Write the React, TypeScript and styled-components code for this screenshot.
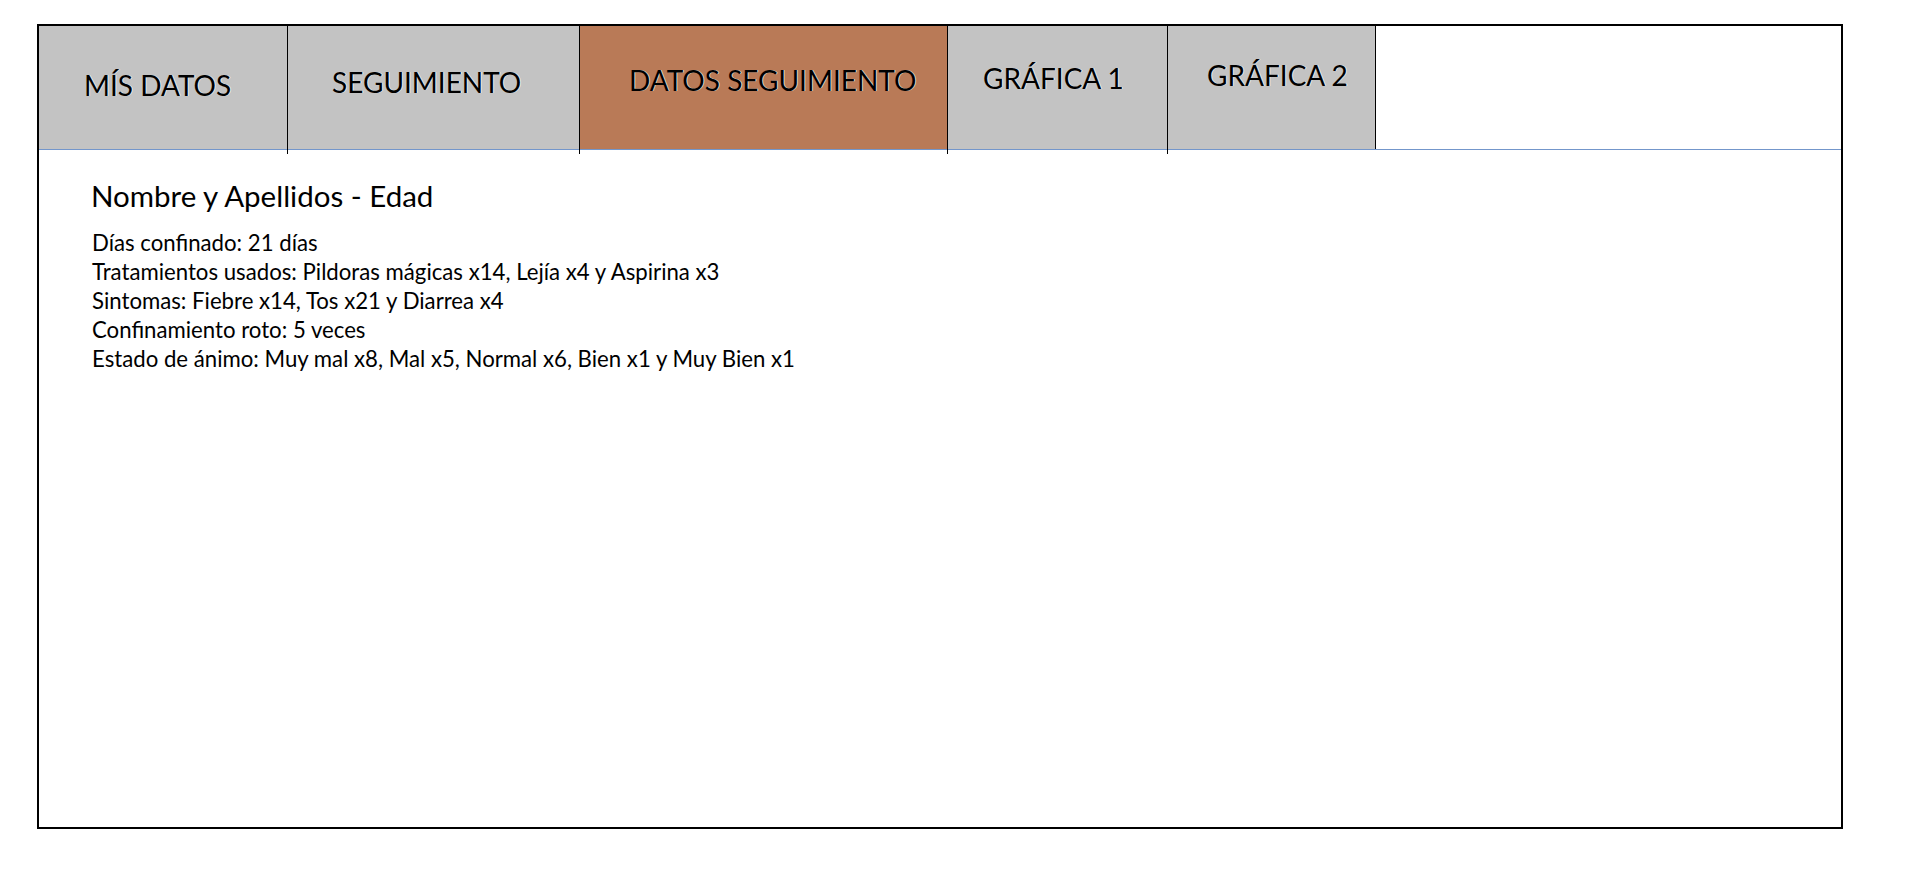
import React from "react";
import styled, { createGlobalStyle } from "styled-components";

const GlobalStyle = createGlobalStyle`
    html, body {
        margin: 0;
        padding: 0;
        background: #fff;
        font-family: Lato, "Open Sans", sans-serif;
        color: #000;
    }
`;

const Page = styled.div`
    padding: 24px 0 0 37px;
`;

const Frame = styled.div`
    width: 1806px;
    height: 805px;
    box-sizing: border-box;
    border: 2px solid #000;
    display: flex;
    flex-direction: column;
`;

const TabBar = styled.div`
    display: flex;
    height: 123px;
    border-bottom: 1px solid #7396cb;
`;

const Tab = styled.div<{ $width: number; $active?: boolean; $padLeft: number; $padTop: number; $tail?: boolean }>`
    position: relative;
    width: ${(p) => p.$width}px;
    box-sizing: border-box;
    background: ${(p) => (p.$active ? "#B97A57" : "#C3C3C3")};
    border-right: 1px solid #000;
    padding-left: ${(p) => p.$padLeft}px;
    padding-top: ${(p) => p.$padTop}px;
    font-size: 28px;
    text-shadow: 1px 0 0 rgba(255, 255, 255, 0.7);
    white-space: nowrap;

    &::after {
        content: "";
        display: ${(p) => (p.$tail ? "block" : "none")};
        position: absolute;
        right: -1px;
        bottom: -5px;
        width: 1px;
        height: 5px;
        background: #000;
    }
`;

const Content = styled.div`
    padding: 30px 0 0 52px;
`;

const Heading = styled.h1`
    margin: 0 0 16px;
    font-size: 29.5px;
    font-weight: 400;
    line-height: 32px;
`;

const Line = styled.p`
    margin: 0;
    padding-left: 1px;
    font-size: 22.2px;
    line-height: 29px;
`;

const tabs = [
    { label: "MÍS DATOS", width: 249, padLeft: 45, padTop: 42, tail: true },
    { label: "SEGUIMIENTO", width: 292, padLeft: 44, padTop: 39, tail: true },
    { label: "DATOS SEGUIMIENTO", width: 368, padLeft: 49, padTop: 37, active: true, tail: true },
    { label: "GRÁFICA 1", width: 220, padLeft: 35, padTop: 35, tail: true },
    { label: "GRÁFICA 2", width: 208, padLeft: 39, padTop: 32 },
];

const lines = [
    "Días confinado: 21 días",
    "Tratamientos usados: Pildoras mágicas x14, Lejía x4 y Aspirina x3",
    "Sintomas: Fiebre x14, Tos x21 y Diarrea x4",
    "Confinamiento roto: 5 veces",
    "Estado de ánimo: Muy mal x8, Mal x5, Normal x6, Bien x1 y Muy Bien x1",
];

export default function App() {
    return (
        <Page>
            <GlobalStyle />
            <Frame>
                <TabBar>
                    {tabs.map((t) => (
                        <Tab
                            key={t.label}
                            $width={t.width}
                            $active={t.active}
                            $padLeft={t.padLeft}
                            $padTop={t.padTop}
                            $tail={t.tail}
                        >
                            {t.label}
                        </Tab>
                    ))}
                </TabBar>
                <Content>
                    <Heading>Nombre y Apellidos - Edad</Heading>
                    {lines.map((l) => (
                        <Line key={l}>{l}</Line>
                    ))}
                </Content>
            </Frame>
        </Page>
    );
}
